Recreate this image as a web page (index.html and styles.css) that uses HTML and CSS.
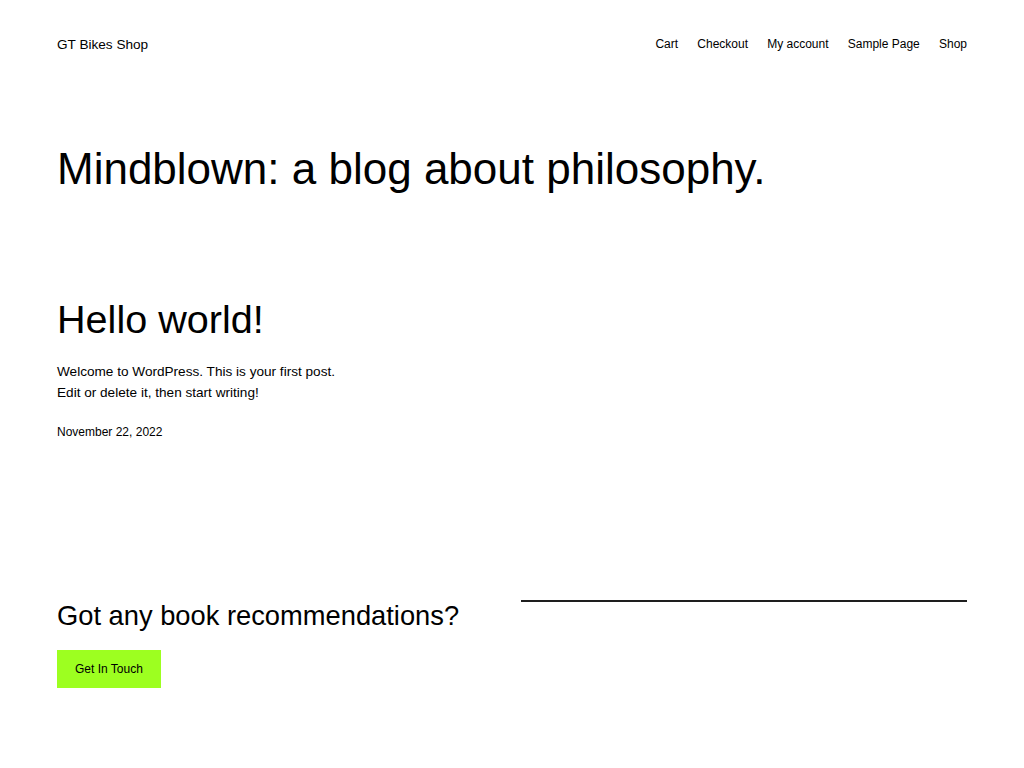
FILE: index.html
```html
<!DOCTYPE html>
<html>

<head>
  <meta charset="UTF-8">
  <title>GT Bikes Shop</title>
  <link rel="stylesheet" href="styles.css">
</head>

<body>
  <div class="page">
    <header class="site-header">
      <a class="site-title" href="#">GT Bikes Shop</a>
      <nav class="site-nav">
        <a href="#">Cart</a>
        <a href="#">Checkout</a>
        <a href="#">My account</a>
        <a href="#">Sample Page</a>
        <a href="#">Shop</a>
      </nav>
    </header>

    <main>
      <h1 class="page-title">Mindblown: a blog about philosophy.</h1>

      <article class="post">
        <h2 class="post-title">Hello world!</h2>
        <p class="post-excerpt">Welcome to WordPress. This is your first post.<br>Edit or delete it, then start writing!</p>
        <div class="post-date">November 22, 2022</div>
      </article>

      <section class="cta">
        <div class="cta-left">
          <h2 class="cta-title">Got any book recommendations?</h2>
          <a class="button" href="#">Get In Touch</a>
        </div>
        <div class="cta-right">
          <hr class="separator">
        </div>
      </section>
    </main>
  </div>
</body>

</html>
```

FILE: styles.css
```css
body {
  margin: 0;
  background: #fff;
  color: #000;
  font-family: "Liberation Sans", Arial, sans-serif;
}

a {
  color: inherit;
  text-decoration: none;
}

.page {
  max-width: 910px;
  margin: 0 auto;
  padding-bottom: 60px;
}

.site-header {
  display: flex;
  justify-content: space-between;
  align-items: center;
  padding-top: 34px;
  font-size: 12px;
  line-height: 1.6;
}

.site-title {
  font-size: 13.6px;
}

.site-nav {
  display: flex;
  gap: 19.2px;
}

.page-title {
  margin: 87.5px 0 0;
  font-size: 44px;
  font-weight: normal;
  line-height: 1.2;
}

.post {
  margin-top: 100px;
}

.post-title {
  margin: 0;
  font-size: 39.6px;
  font-weight: normal;
  line-height: 1.2;
}

.post-excerpt {
  margin: 17px 0 0;
  font-size: 13.6px;
  line-height: 1.6;
}

.post-date {
  margin-top: 19.3px;
  font-size: 12px;
  line-height: 1.6;
}

.cta {
  display: grid;
  grid-template-columns: 1fr 1fr;
  gap: 18px;
  margin-top: 157px;
}

.cta-title {
  margin: 0;
  font-size: 27.3px;
  font-weight: normal;
  line-height: 1.2;
}

.button {
  display: inline-block;
  margin-top: 18px;
  padding: 12px 18px;
  background: #9dff20;
  font-size: 12px;
  line-height: 14px;
}

.separator {
  margin: 0;
  border: none;
  height: 2px;
  background: #1e1e1e;
}
```
